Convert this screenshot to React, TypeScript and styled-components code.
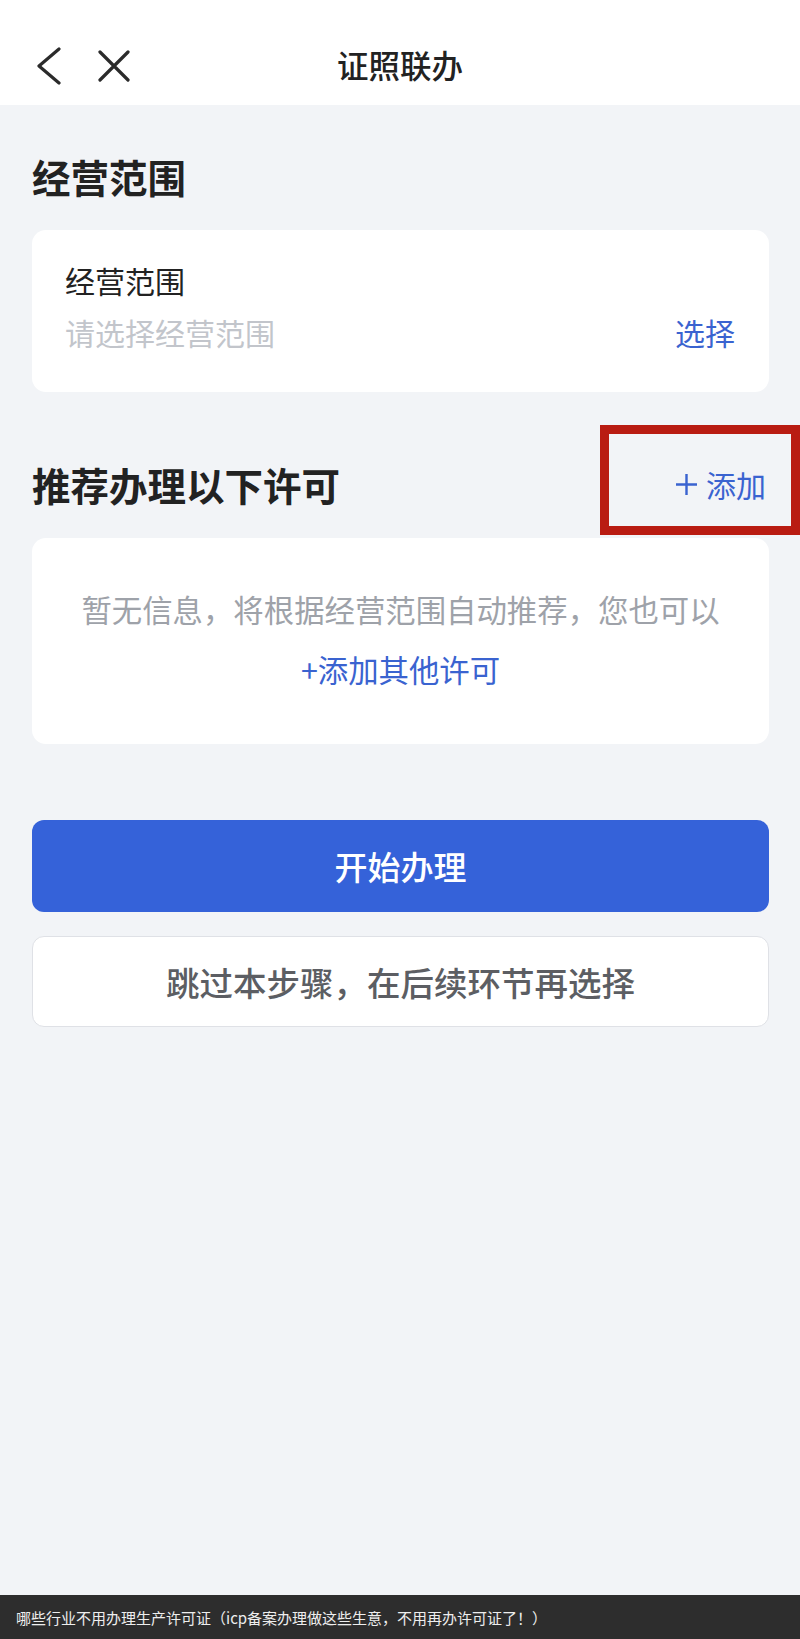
import styled, { createGlobalStyle } from "styled-components";

const GlobalStyle = createGlobalStyle`
    html, body { margin: 0; padding: 0; background: #f2f4f7; }
    body { font-family: "Noto Sans CJK SC", "Noto Sans", sans-serif; }
    * { box-sizing: border-box; }
`;

const Page = styled.div`
    min-height: 100vh; display: flex; flex-direction: column; background: #f2f4f7;
`;
const Header = styled.header`
    height: 105px; background: #fff; display: flex; align-items: center; position: relative; padding: 0 0 0 36px;
`;
const NavIcons = styled.div`
    display: flex; align-items: center; gap: 36px; padding-top: 26px;
`;
const IconBtn = styled.button`
    border: 0; padding: 0; background: none; display: flex; color: #2b2b2b;
`;
const Title = styled.h1`
    position: absolute; left: 0; right: 0; top: 42px; margin: 0; text-align: center;
    font-size: 31.5px; line-height: 44px; font-weight: 500; color: #222; pointer-events: none;
`;
const Content = styled.main`
    padding: 0 31px 0 32px; display: flex; flex-direction: column;
`;
const SectionRow = styled.div<{ $top: number }>`
    margin-top: ${(p) => p.$top}px; display: flex; justify-content: space-between; align-items: center; position: relative;
`;
const SectionTitle = styled.h2`
    margin: 0; font-size: 38.5px; line-height: 53px; font-weight: 700; color: #222;
`;
const AddLink = styled.span`
    font-size: 30px; line-height: 53px; color: #3a63d0; padding-right: 3px; display: flex; align-items: center; gap: 9px;
`;
const Highlight = styled.div`
    position: absolute; left: 568px; top: -33px; width: 200px; height: 110px; border: 9px solid #b91c12; pointer-events: none;
`;
const Card = styled.div<{ $top: number }>`
    margin-top: ${(p) => p.$top}px; background: #fff; border-radius: 14px;
`;
const FieldCard = styled(Card)`
    padding: 29px 34px 39px 33px;
`;
const FieldLabel = styled.div`
    font-size: 30px; line-height: 42px; color: #222;
`;
const FieldRow = styled.div`
    margin-top: 10px; display: flex; justify-content: space-between; align-items: center;
    font-size: 30px; line-height: 42px;
`;
const Placeholder = styled.span`
    color: #c2c5cb;
`;
const SelectLink = styled.span`
    color: #3a63d0;
`;
const EmptyCard = styled(Card)`
    padding: 41px 10px 45px; text-align: center; font-size: 30.4px; line-height: 60px; color: #9ea2a9;
`;
const EmptyLink = styled.div`
    color: #3a63d0;
`;
const Button = styled.button<{ $primary?: boolean }>`
    width: 100%; height: ${(p) => (p.$primary ? 92 : 91)}px; border-radius: 12px; font-family: inherit;
    font-size: ${(p) => (p.$primary ? 33 : 33.5)}px; font-weight: 500; cursor: pointer;
    margin-top: ${(p) => (p.$primary ? 76 : 24)}px;
    background: ${(p) => (p.$primary ? "#3562d9" : "#fff")};
    color: ${(p) => (p.$primary ? "#fff" : "#5c5e63")};
    border: ${(p) => (p.$primary ? "0" : "1px solid #dfe1e6")};
`;
const BottomBar = styled.footer`
    margin-top: auto; height: 44px; background: #2d2d2d; color: #eee; display: flex; align-items: center;
    padding-left: 16px; font-size: 15px;
`;

export default function App() {
    return (
        <Page>
            <GlobalStyle />
            <Header>
                <NavIcons>
                    <IconBtn aria-label="返回">
                        <svg width="26" height="38" viewBox="0 0 26 38" fill="none" stroke="currentColor" strokeWidth="3.2" strokeLinecap="round" strokeLinejoin="round">
                            <path d="M23 2 L3 19 L23 36" />
                        </svg>
                    </IconBtn>
                    <IconBtn aria-label="关闭">
                        <svg width="32" height="32" viewBox="0 0 32 32" fill="none" stroke="currentColor" strokeWidth="3.2" strokeLinecap="round">
                            <path d="M2 2 L30 30 M30 2 L2 30" />
                        </svg>
                    </IconBtn>
                </NavIcons>
                <Title>证照联办</Title>
            </Header>
            <Content>
                <SectionRow $top={45}>
                    <SectionTitle>经营范围</SectionTitle>
                </SectionRow>
                <FieldCard $top={27}>
                    <FieldLabel>经营范围</FieldLabel>
                    <FieldRow>
                        <Placeholder>请选择经营范围</Placeholder>
                        <SelectLink>选择</SelectLink>
                    </FieldRow>
                </FieldCard>
                <SectionRow $top={66}>
                    <SectionTitle>推荐办理以下许可</SectionTitle>
                    <AddLink>
                        <svg width="21" height="21" viewBox="0 0 20 20" stroke="currentColor" strokeWidth="2.3">
                            <path d="M10 0 V20 M0 10 H20" />
                        </svg>
                        添加
                    </AddLink>
                    <Highlight />
                </SectionRow>
                <EmptyCard $top={27}>
                    <div>暂无信息，将根据经营范围自动推荐，您也可以</div>
                    <EmptyLink>+添加其他许可</EmptyLink>
                </EmptyCard>
                <Button $primary>开始办理</Button>
                <Button>跳过本步骤，在后续环节再选择</Button>
            </Content>
            <BottomBar>哪些行业不用办理生产许可证（icp备案办理做这些生意，不用再办许可证了！）</BottomBar>
        </Page>
    );
}
